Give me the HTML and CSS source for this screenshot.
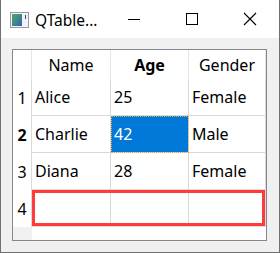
FILE: index.html
```html
<!DOCTYPE html>
<html>
<head>
<meta charset="utf-8">
<link rel="stylesheet" href="styles.css">
</head>
<body>
<div class="window">
  <div class="titlebar">
    <svg class="appicon" width="19" height="16" viewBox="0 0 19 16">
      <defs>
        <linearGradient id="g" x1="0" y1="0" x2="1" y2="1">
          <stop offset="0" stop-color="#5a9e6a"/>
          <stop offset="0.5" stop-color="#3f8a8c"/>
          <stop offset="1" stop-color="#2f5fae"/>
        </linearGradient>
      </defs>
      <rect x="0.5" y="0.5" width="18" height="15" fill="#f4f4f4" stroke="#9a9a9a"/>
      <rect x="2" y="2" width="10" height="12" fill="url(#g)"/>
      <rect x="13" y="2" width="4" height="12" fill="#eef3f6"/>
      <rect x="15" y="3" width="1" height="4" fill="#2a4d8f"/>
    </svg>
    <span class="title">QTable...</span>
    <div class="controls">
      <span class="ctl"><svg width="14" height="14" viewBox="0 0 14 14"><line x1="1" y1="7.5" x2="13" y2="7.5" stroke="#000" stroke-width="1"/></svg></span>
      <span class="ctl"><svg width="14" height="14" viewBox="0 0 14 14"><rect x="1.5" y="1.5" width="11" height="11" fill="none" stroke="#000" stroke-width="1"/></svg></span>
      <span class="ctl"><svg width="14" height="14" viewBox="0 0 14 14"><path d="M1 1 L13 13 M13 1 L1 13" stroke="#000" stroke-width="1.1" fill="none"/></svg></span>
    </div>
  </div>
  <div class="client">
    <div class="frame">
      <div class="grid">
        <div class="corner"></div>
        <div class="hh">Name</div>
        <div class="hh bold">Age</div>
        <div class="hh">Gender</div>

        <div class="vh">1</div>
        <div class="cell">Alice</div>
        <div class="cell">25</div>
        <div class="cell">Female</div>

        <div class="vh bold">2</div>
        <div class="cell">Charlie</div>
        <div class="cell selected">42</div>
        <div class="cell">Male</div>

        <div class="vh">3</div>
        <div class="cell">Diana</div>
        <div class="cell">28</div>
        <div class="cell">Female</div>

        <div class="vh">4</div>
        <div class="cell"></div>
        <div class="cell"></div>
        <div class="cell"></div>

        <div class="vfill"></div>
        <div class="fill"></div>

        <div class="highlight"></div>
      </div>
    </div>
  </div>
</div>
</body>
</html>
```

FILE: styles.css
```css
html, body {
  margin: 0;
  padding: 0;
  background: #f0f0f0;
}
body {
  font-family: "Noto Sans", "Open Sans", sans-serif;
  color: #000;
}
.window {
  width: 280px;
  height: 253px;
  box-sizing: border-box;
  border: 1px solid #707070;
  border-top: none;
  background: #f0f0f0;
  display: flex;
  flex-direction: column;
}
.titlebar {
  height: 38px;
  flex: none;
  background: #fff;
  display: flex;
  align-items: center;
}
.appicon {
  margin-left: 9px;
  margin-top: 1px;
  flex: none;
}
.title {
  margin-left: 6px;
  font-size: 15.5px;
  line-height: 20px;
  margin-top: 1px;
}
.controls {
  margin-left: auto;
  display: flex;
  height: 38px;
}
.ctl {
  width: 58px;
  display: flex;
  align-items: center;
  justify-content: center;
}
.client {
  flex: 1;
  padding: 11px 12px 11px 11px;
  display: flex;
}
.frame {
  width: 255px;
  height: 192px;
  box-sizing: border-box;
  border: 1px solid #828790;
  background: #fff;
}
.grid {
  position: relative;
  display: grid;
  grid-template-columns: 19px 79px 78px 77px;
  grid-template-rows: 29px repeat(4, 37px) 1fr;
  height: 100%;
  font-size: 16px;
}
.corner {
  border-right: 1px solid #e5e5e5;
}
.hh {
  border-right: 1px solid #e5e5e5;
  display: flex;
  align-items: center;
  justify-content: center;
  padding-top: 1px;
}
.bold {
  font-weight: bold;
}
.vh {
  border-right: 1px solid #d9d9d9;
  display: flex;
  align-items: center;
  justify-content: center;
}
.cell {
  box-sizing: border-box;
  border-right: 1px solid #d9d9d9;
  border-bottom: 1px solid #d9d9d9;
  display: flex;
  align-items: center;
  padding-left: 3px;
}
.selected {
  background: #0078d7;
  color: #fff;
  outline: 1px dotted #e9a545;
  outline-offset: -1px;
}
.vfill {
  background: #f0f0f0;
}
.fill {
  grid-column: 2 / 5;
  background: #fff;
}
.highlight {
  position: absolute;
  left: 19px;
  top: 140px;
  width: 233px;
  height: 36px;
  box-sizing: border-box;
  border: 3px solid #ff3b3b;
}
```
